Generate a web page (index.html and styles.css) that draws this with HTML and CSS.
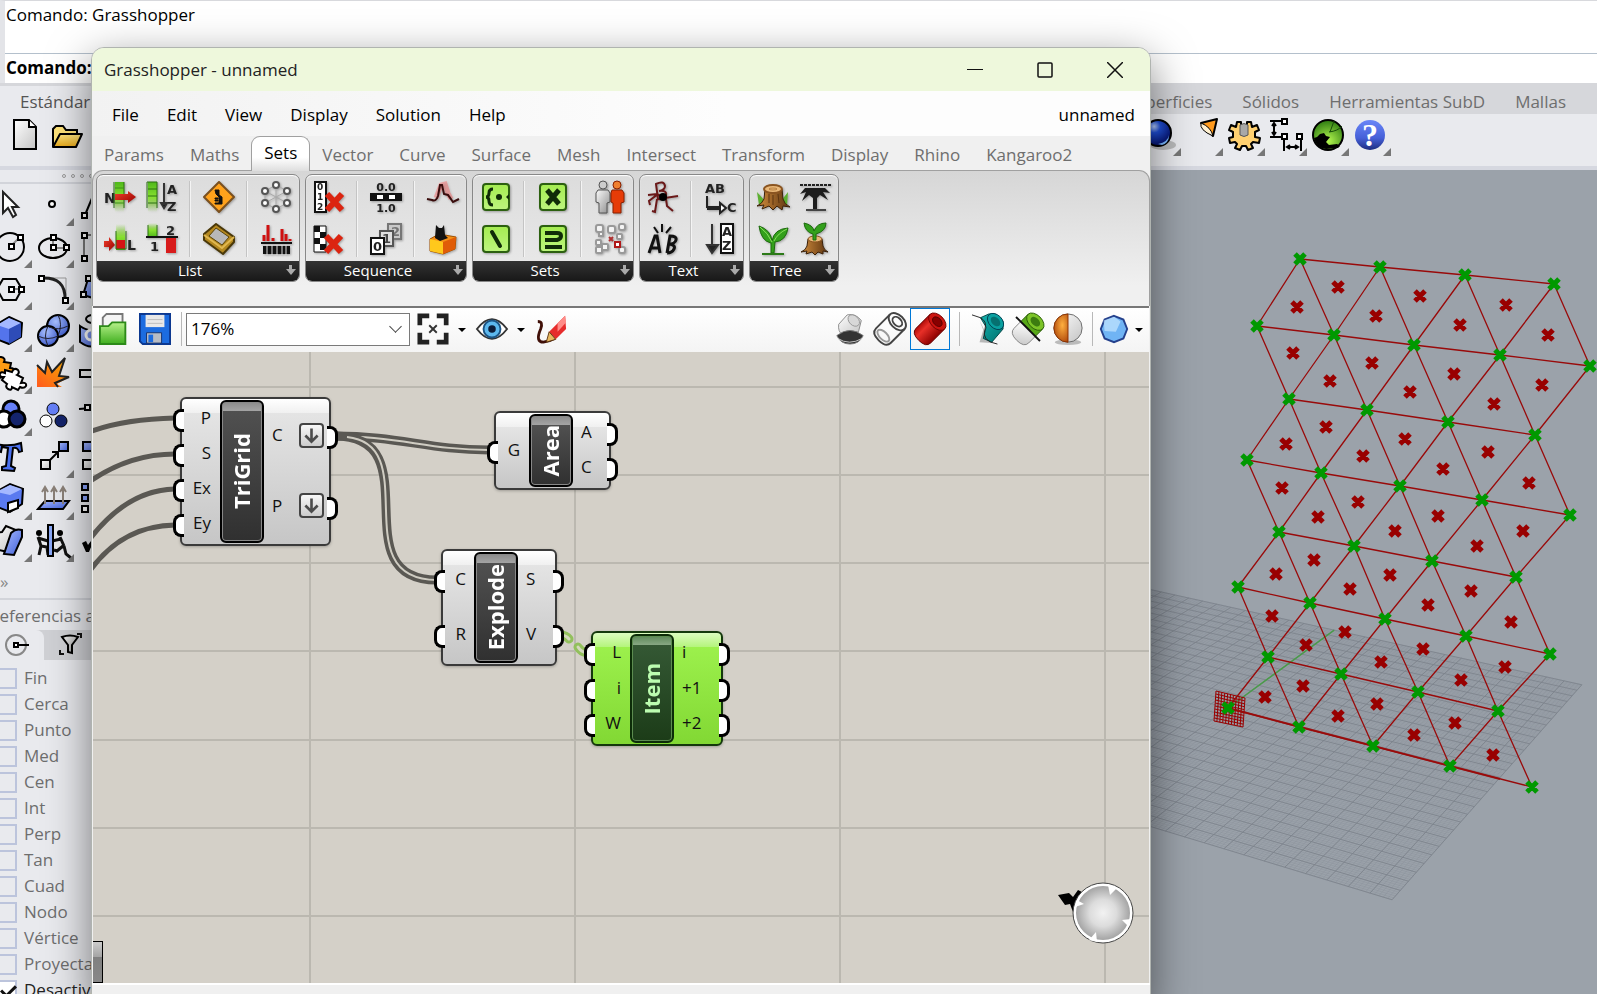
FILE: index.html
```html
<!DOCTYPE html>
<html lang="es">
<head>
    <meta charset="UTF-8">
    <meta name="viewport" content="width=device-width, initial-scale=1.0">
    <title>Grasshopper - unnamed</title>
    <link rel="stylesheet" href="styles.css">
</head>
<body>

    <!-- Shared gradients for the icons -->
    <svg class="defs" width="0" height="0" aria-hidden="true">
        <defs>
            <linearGradient id="g-blue" x1="0" y1="0" x2="1" y2="1"><stop offset="0" stop-color="#a9bcff"/><stop offset="1" stop-color="#3f5fd8"/></linearGradient>
            <linearGradient id="g-page" x1="0" y1="0" x2="1" y2="1"><stop offset="0" stop-color="#fff"/><stop offset="1" stop-color="#c4c4c4"/></linearGradient>
            <linearGradient id="g-gold" x1="0" y1="0" x2="0" y2="1"><stop offset="0" stop-color="#ffe680"/><stop offset="1" stop-color="#e8a818"/></linearGradient>
            <linearGradient id="g-fire" x1="1" y1="0" x2="0" y2="1"><stop offset="0" stop-color="#ffb400"/><stop offset="1" stop-color="#ff5a1e"/></linearGradient>
            <linearGradient id="g-bar" x1="0" y1="0" x2="0" y2="1"><stop offset="0" stop-color="#4fb81a"/><stop offset=".5" stop-color="#86e02e"/><stop offset="1" stop-color="#86e02e" stop-opacity="0"/></linearGradient>
            <linearGradient id="g-barup" x1="0" y1="1" x2="0" y2="0"><stop offset="0" stop-color="#4fb81a"/><stop offset=".5" stop-color="#86e02e"/><stop offset="1" stop-color="#86e02e" stop-opacity="0"/></linearGradient>
            <linearGradient id="g-red" x1="0" y1="0" x2="1" y2="1"><stop offset="0" stop-color="#f2402c"/><stop offset="1" stop-color="#980000"/></linearGradient>
            <linearGradient id="g-redtube" x1="0" y1="0" x2="1" y2="0"><stop offset="0" stop-color="#b00c08"/><stop offset=".3" stop-color="#e83028"/><stop offset="1" stop-color="#8c0000"/></linearGradient>
            <linearGradient id="g-grey" x1="0" y1="0" x2="1" y2="1"><stop offset="0" stop-color="#fafafa"/><stop offset="1" stop-color="#8c8c8c"/></linearGradient>
            <linearGradient id="g-lime" x1="0" y1="0" x2="0" y2="1"><stop offset="0" stop-color="#a4ec50"/><stop offset="1" stop-color="#bdf57e"/></linearGradient>
            <linearGradient id="g-help" x1="0" y1="0" x2="0" y2="1"><stop offset="0" stop-color="#6a86f8"/><stop offset=".6" stop-color="#4660d8"/><stop offset="1" stop-color="#1c2c80"/></linearGradient>
            <radialGradient id="g-ball" cx=".35" cy=".25" r=".8"><stop offset="0" stop-color="#b8d0ff"/><stop offset=".3" stop-color="#2050d8"/><stop offset="1" stop-color="#00085c"/></radialGradient>
            <radialGradient id="g-sphere" cx=".4" cy=".3" r=".8"><stop offset="0" stop-color="#a8c0ff"/><stop offset="1" stop-color="#3452c8"/></radialGradient>
            <radialGradient id="g-green" cx=".5" cy=".7" r=".7"><stop offset="0" stop-color="#b4f850"/><stop offset="1" stop-color="#2c7a10"/></radialGradient>
            <radialGradient id="g-orange" cx=".6" cy=".4" r=".8"><stop offset="0" stop-color="#ffb040"/><stop offset="1" stop-color="#a03400"/></radialGradient>
            <radialGradient id="g-compass"><stop offset="0" stop-color="#f2f2f2"/><stop offset=".5" stop-color="#dcdcdc"/><stop offset="1" stop-color="#a4a4a4"/></radialGradient>
            <linearGradient id="g-open" x1="0" y1="0" x2="0" y2="1"><stop offset="0" stop-color="#b6f08a"/><stop offset="1" stop-color="#3fae1e"/></linearGradient>
            <linearGradient id="g-teal" x1="0" y1="0" x2="1" y2="1"><stop offset="0" stop-color="#14b4b0"/><stop offset="1" stop-color="#00706e"/></linearGradient>
            <linearGradient id="g-wood" x1="0" y1="0" x2="1" y2="0"><stop offset="0" stop-color="#d28c3c"/><stop offset="1" stop-color="#5c3410"/></linearGradient>
        </defs>
    </svg>

    <div class="rhino">
        <section class="command">
            <p class="command-history">Comando: Grasshopper</p>
            <label class="command-line">Comando:<input type="text" aria-label="Comando"></label>
        </section>

        <nav class="rhino-tabs">
            <a class="rhino-tab rhino-tab-active" href="#">Estándar</a>
            <a class="rhino-tab rhino-tab-first" href="#">Superficies</a>
            <a class="rhino-tab" href="#">Sólidos</a>
            <a class="rhino-tab" href="#">Herramientas SubD</a>
            <a class="rhino-tab" href="#">Mallas</a>
        </nav>

        <div class="rhino-toolbar">
            <button class="tool tool-plain" aria-label="Nuevo"><svg viewBox="0 0 32 32"><path d="M5 1h15l7 7v22H5z" fill="url(#g-page)" stroke="#000" stroke-width="2"/><path d="M20 1v7h7" fill="#fff" stroke="#000" stroke-width="2"/></svg></button>
            <button class="tool tool-plain" aria-label="Abrir"><svg viewBox="0 0 32 32"><path d="M2 28V10l3-3h7l3 4h11v5" fill="#ffe47a" stroke="#000" stroke-width="2"/><path d="M2 28l7-13h22l-6 13z" fill="url(#g-gold)" stroke="#000" stroke-width="2" stroke-linejoin="round"/></svg></button>
            <button class="tool tool-first" aria-label="Render"><svg viewBox="0 0 32 32"><ellipse cx="19" cy="26" rx="13" ry="5" fill="#999" opacity=".6"/><circle cx="14" cy="14" r="13" fill="url(#g-ball)" stroke="#000" stroke-width="2"/><path d="M14 25q10-2 11-9 0 8-7 10z" fill="#7ab8ff"/></svg></button>
            <button class="tool" aria-label="Foco"><svg viewBox="0 0 32 32"><path d="M15 4L31 0l-4 17z" fill="#ff9a1e" stroke="#000" stroke-width="2" stroke-linejoin="round"/><path d="M15 4q-2 7 12 13-2-9-12-13z" fill="#fff0d0" stroke="#000" stroke-width="1"/></svg></button>
            <button class="tool" aria-label="Opciones"><svg viewBox="0 0 32 32"><path d="M9 3h4v4h6V3h4l1 5 5-2 2 5-4 2v5l5 1-1 5-6-1-2 2 2 4-5 2-2-4h-4l-2 4-5-2 2-4-2-2-5 1-1-5 4-1v-5l-4-2 2-5 5 2z" fill="#ffd070" stroke="#000" stroke-width="2" stroke-linejoin="round"/><path d="M12 6q4-3 8 0v10q-4 3-8 0z" fill="#a8a8a8" stroke="#555"/></svg></button>
            <button class="tool" aria-label="Acotar"><svg viewBox="0 0 32 32"><path d="M0 2h12M0 18h12M14 20v12M31 20v12M4 5v10M2 7l2-3 2 3M2 13l2 3 2-3M18 28h9M20 26l-3 2 3 2M25 26l3 2-3 2" fill="none" stroke="#000" stroke-width="2"/><path d="M12 0h5v5h-5zM12 15h5v5h-5zM27 15h5v5h-5z" fill="#fff" stroke="#000" stroke-width="2"/></svg></button>
            <button class="tool" aria-label="Grasshopper"><svg viewBox="0 0 32 32"><circle cx="16" cy="16" r="15" fill="url(#g-green)" stroke="#000" stroke-width="2"/><path d="M2 19q4-1 6-4l4-1 2 3 4 1-4 5 3 3 8-1 3 2-2 2-12 1q-10-1-12-11z" fill="#000"/><path d="M17 13q9-1 13-6M18 13L22 2" stroke="#164c08" fill="none"/></svg></button>
            <button class="tool" aria-label="Ayuda"><svg viewBox="0 0 32 32"><circle cx="16" cy="16" r="15" fill="url(#g-help)"/><text x="16" y="27" class="help-mark">?</text></svg></button>
        </div>

        <div class="rhino-main">
            <aside class="sidebar">
                <div class="grip"><i></i><i></i><i></i><i></i></div>
                <div class="tools">
                    <button class="tool tool-plain" aria-label="Seleccionar"><svg viewBox="0 0 32 32"><path d="M8 3v21l5-5 5 9 3-2-4-8h6z" fill="#fff" stroke="#222" stroke-width="2"/></svg></button>
                    <button class="tool" aria-label="Punto"><svg viewBox="0 0 32 32"><circle cx="15" cy="15" r="3" fill="#fff" stroke="#000" stroke-width="2"/></svg></button>
                    <button class="tool" aria-label="Polilínea"><svg viewBox="0 0 32 32"><path d="M6 26L16 2" stroke="#000" stroke-width="2"/><path d="M3 24h5v5H3z" fill="#fff" stroke="#000" stroke-width="2"/></svg></button>

                    <button class="tool" aria-label="Círculo"><svg viewBox="0 0 32 32"><circle cx="15" cy="16" r="14" fill="none" stroke="#000" stroke-width="2"/><path d="M16 15l9-9" stroke="#888" stroke-width="2"/><path d="M14 13h5v5h-5zM23 4h5v5h-5z" fill="#fff" stroke="#000" stroke-width="2"/></svg></button>
                    <button class="tool" aria-label="Elipse"><svg viewBox="0 0 32 32"><ellipse cx="16" cy="17" rx="14" ry="10" fill="none" stroke="#000" stroke-width="2"/><path d="M16 7v10h14" stroke="#888" stroke-width="2" fill="none"/><path d="M14 4h5v5h-5zM14 14h5v5h-5zM27 14h5v5h-5z" fill="#fff" stroke="#000" stroke-width="2"/></svg></button>
                    <button class="tool" aria-label="Rectángulo"><svg viewBox="0 0 32 32"><path d="M5 4h20M5 4v24" stroke="#777" stroke-width="2"/><path d="M3 2h5v5H3zM3 25h5v5H3z" fill="#fff" stroke="#000" stroke-width="2"/></svg></button>

                    <button class="tool" aria-label="Polígono"><svg viewBox="0 0 32 32"><path d="M2 16L8 6h13l6 10-6 11H8z" fill="none" stroke="#000" stroke-width="2"/><path d="M17 16h9" stroke="#888" stroke-width="2"/><path d="M14 14h5v5h-5zM24 14h5v5h-5z" fill="#fff" stroke="#000" stroke-width="2"/></svg></button>
                    <button class="tool" aria-label="Empalme"><svg viewBox="0 0 32 32"><path d="M6 5h23v22" fill="none" stroke="#999"/><path d="M5 5q24-1 23 22" fill="none" stroke="#222" stroke-width="3"/><path d="M2 3h5v5H2zM26 25h5v5h-5z" fill="#fff" stroke="#000" stroke-width="2"/></svg></button>
                    <button class="tool" aria-label="Superficie"><svg viewBox="0 0 32 32"><path d="M9 6L4 22l20 6V8z" fill="url(#g-blue)" stroke="#000" stroke-width="2"/><path d="M7 3h5v5H7zM2 19h5v5H2z" fill="#fff" stroke="#000" stroke-width="2"/></svg></button>

                    <button class="tool" aria-label="Caja"><svg viewBox="0 0 32 32"><path d="M1 10L14 2l13 6-1 14-12 7L1 24z" fill="#5474ec" stroke="#000" stroke-width="2" stroke-linejoin="round"/><path d="M2 10l12-7 12 5-12 6z" fill="#a4b8ff"/><path d="M14 14l12-6v14l-12 7z" fill="#2e4cb8"/></svg></button>
                    <button class="tool" aria-label="Booleana"><svg viewBox="0 0 32 32"><circle cx="21" cy="11" r="11" fill="url(#g-sphere)" stroke="#000" stroke-width="2"/><circle cx="11" cy="21" r="10" fill="url(#g-sphere)" stroke="#000" stroke-width="2"/><path d="M1 21q10 5 20 0M11 11q-5 10 0 20M12 12q9 4 19-1M21 0q5 9 0 21" fill="none" stroke="#223" stroke-width="1"/></svg></button>
                    <button class="tool" aria-label="Proyectar"><svg viewBox="0 0 32 32"><path d="M1 11q13 9 20-1v17q-8 9-20 0z" fill="url(#g-blue)" stroke="#000" stroke-width="2"/><circle cx="12" cy="20" r="5" fill="none" stroke="#fff" stroke-width="3"/><ellipse cx="14" cy="4" rx="7" ry="4" fill="none" stroke="#000" stroke-width="2"/></svg></button>

                    <button class="tool" aria-label="Unir"><svg viewBox="0 0 32 32"><path d="M-4 4l6 1q-1-5 4-5 5 1 3 5l7 1-1 5q5 0 5 4-1 4-6 2l-3 5-6-2q-1 5-5 3-4-1-2-5l-5-1z" fill="#ff9c14" stroke="#000" stroke-width="2"/><path d="M10 13l7 2q2-5 6-2 2 3-1 5l6 3-2 5q6-1 5 3-2 3-6 1l-2 3-6-3q0 4-4 2-3-2-1-5l-5-4 2-3q-5 0-4-3 1-3 5-1z" fill="#fff" stroke="#000" stroke-width="2"/></svg></button>
                    <button class="tool tool-plain" aria-label="Descomponer"><svg viewBox="0 0 32 32"><path d="M0 30V8l8 8 2-11 5 10L28 1l-6 18 10 1-12 7 5 3z" fill="url(#g-fire)"/><path d="M0 8l8 8 2-11 5 10L28 1l-6 18 10 1-14 6 3 4" fill="none" stroke="#222" stroke-width="2"/></svg></button>
                    <button class="tool tool-plain" aria-label="Recortar"><svg viewBox="0 0 32 32"><path d="M1 13h26v7H1z" fill="#eee" stroke="#000" stroke-width="2"/></svg></button>

                    <button class="tool" aria-label="Agrupar"><svg viewBox="0 0 32 32"><g stroke="#000" stroke-width="3"><circle cx="16" cy="10" r="8" fill="#6680f8"/><circle cx="9" cy="20" r="8" fill="#fff"/><circle cx="22" cy="20" r="8" fill="#14246c"/></g></svg></button>
                    <button class="tool tool-plain" aria-label="Desagrupar"><svg viewBox="0 0 32 32"><g stroke="#000" stroke-width="1"><circle cx="16" cy="10" r="6" fill="#6680f8"/><circle cx="9" cy="22" r="6" fill="#fff"/><circle cx="24" cy="22" r="6" fill="#14246c"/></g></svg></button>
                    <button class="tool tool-plain" aria-label="Editar puntos"><svg viewBox="0 0 32 32"><path d="M0 10l24-2" stroke="#000" stroke-width="2"/><path d="M6 6h5v5H6z" fill="#fff" stroke="#000" stroke-width="2"/></svg></button>

                    <button class="tool tool-plain" aria-label="Texto"><svg viewBox="0 0 32 32"><path d="M1 3q14 3 25-1l1 8-3 1q-1-5-6-4l-2 18 4 2-1 3-12-1v-3l4-1 2-18-6-1-1 5-4-1z" fill="#4a70f0" stroke="#000" stroke-width="2"/></svg></button>
                    <button class="tool" aria-label="Mover"><svg viewBox="0 0 32 32"><path d="M13 19l8-8M15 11h6v6" stroke="#000" stroke-width="2" fill="none"/><path d="M22 1h9v9h-9z" fill="url(#g-blue)" stroke="#000" stroke-width="2"/><path d="M4 19h9v9H4z" fill="url(#g-page)" stroke="#000" stroke-width="2"/></svg></button>
                    <button class="tool" aria-label="Copiar"><svg viewBox="0 0 32 32"><path d="M4 1h9v9H4zM17 1h9v9h-9z" fill="url(#g-blue)" stroke="#000" stroke-width="2"/><path d="M4 19h9v9H4z" fill="url(#g-page)" stroke="#000" stroke-width="2"/></svg></button>

                    <button class="tool" aria-label="Sólidos"><svg viewBox="0 0 32 32"><path d="M1 9l14-8 13 5-1 15-12 8L0 23z" fill="#5a7af0" stroke="#000" stroke-width="2"/><path d="M1 9l14-7 12 4-12 6z" fill="#a4b8ff"/><path d="M13 20l10-3v8l-10 4z" fill="#fff" stroke="#000" stroke-width="2"/></svg></button>
                    <button class="tool" aria-label="Extruir"><svg viewBox="0 0 32 32"><path d="M1 26l7-8h24l-6 8z" fill="url(#g-blue)" stroke="#000" stroke-width="2"/><path d="M8 21V5M17 21V5M26 21V5M5 9l3-5 3 5M14 9l3-5 3 5M23 9l3-5 3 5" stroke="#8a8078" stroke-width="2" fill="none"/></svg></button>
                    <button class="tool" aria-label="Matriz"><svg viewBox="0 0 32 32"><path d="M3 1h6v6H3zM13 1h6v6h-6zM3 12h6v6H3zM13 12h6v6h-6z" fill="#8aa4ff" stroke="#000" stroke-width="2"/><path d="M3 23h6v6H3zM13 23h6v6h-6z" fill="#fff" stroke="#000" stroke-width="2"/></svg></button>

                    <button class="tool" aria-label="Mallas"><svg viewBox="0 0 32 32"><path d="M-2 8l9-1 4-6 10 4-8 22-13-3z" fill="url(#g-page)" stroke="#000" stroke-width="2"/><path d="M16 8q5-5 11-3v7l-8 18-10-1z" fill="url(#g-blue)" stroke="#000" stroke-width="2"/></svg></button>
                    <button class="tool" aria-label="Orientar"><svg viewBox="0 0 32 32"><circle cx="2" cy="8" r="3"/><circle cx="23" cy="8" r="3"/><path d="M1 12l3 9M1 13l10 3M4 21l-2 9M4 21l6 1 1 8M23 12l4 9M24 14l-9 2M26 21l-6 5-3-1M27 21l2 8 5 4" stroke="#111" stroke-width="3" fill="none"/><path d="M11 0h5v31h-5z" fill="#8aa8f8" stroke="#000" stroke-width="2"/></svg></button>
                    <button class="tool tool-plain" aria-label="Verificar"><svg viewBox="0 0 32 32"><path d="M3 18l4-2 2 4q5-8 13-11-9 9-12 18H7z" fill="#000"/></svg></button>
                </div>
                <p class="more">»</p>
                <h2 class="osnap-title">Referencias a objetos</h2>
                <div class="osnap-tabs">
                    <button class="osnap-tab osnap-tab-active" aria-label="Referencias"><svg viewBox="0 0 32 24"><circle cx="12" cy="12" r="10" fill="none" stroke="#888" stroke-width="2"/><path d="M13 12h12" stroke="#000" stroke-width="2"/><path d="M10 10h4v4h-4z" fill="#fff" stroke="#000" stroke-width="2"/></svg></button>
                    <button class="osnap-tab" aria-label="Filtro"><svg viewBox="0 0 32 24"><path d="M7 4q8-3 16 0l-6 8v8l-4-1v-7z" fill="url(#g-grey)" stroke="#000" stroke-width="2"/><path d="M22 1h4v4M5 17v4h4" fill="none" stroke="#111" stroke-width="2"/></svg></button>
                </div>
                <div class="osnaps">
                    <label><input type="checkbox">Fin</label>
                    <label><input type="checkbox">Cerca</label>
                    <label><input type="checkbox">Punto</label>
                    <label><input type="checkbox">Med</label>
                    <label><input type="checkbox">Cen</label>
                    <label><input type="checkbox">Int</label>
                    <label><input type="checkbox">Perp</label>
                    <label><input type="checkbox">Tan</label>
                    <label><input type="checkbox">Cuad</label>
                    <label><input type="checkbox">Nodo</label>
                    <label><input type="checkbox">Vértice</label>
                    <label><input type="checkbox">Proyectar</label>
                    <label class="osnap-on"><input type="checkbox" checked>Desactivar</label>
                </div>
            </aside>
            <main class="viewport">
                <svg id="scene" width="1437" height="824"></svg>
            </main>
        </div>
    </div>

    <!-- Grasshopper window -->
    <div class="window">
        <header class="titlebar">
            <h1>Grasshopper - unnamed</h1>
            <button class="caption-button" aria-label="Minimizar"><svg viewBox="0 0 16 16"><path d="M0 7.5h16" stroke="#111"/></svg></button>
            <button class="caption-button" aria-label="Maximizar"><svg viewBox="0 0 16 16"><rect x="1" y="1" width="14" height="14" rx="1" fill="none" stroke="#111" stroke-width="1.5"/></svg></button>
            <button class="caption-button" aria-label="Cerrar"><svg viewBox="0 0 16 16"><path d="M0 0l16 16M16 0L0 16" stroke="#111" stroke-width="1.5"/></svg></button>
        </header>

        <nav class="menu">
            <button>File</button>
            <button>Edit</button>
            <button>View</button>
            <button>Display</button>
            <button>Solution</button>
            <button>Help</button>
            <span class="menu-doc">unnamed</span>
        </nav>

        <nav class="tabs">
            <a href="#">Params</a>
            <a href="#">Maths</a>
            <a class="tab-active" href="#">Sets</a>
            <a href="#">Vector</a>
            <a href="#">Curve</a>
            <a href="#">Surface</a>
            <a href="#">Mesh</a>
            <a href="#">Intersect</a>
            <a href="#">Transform</a>
            <a href="#">Display</a>
            <a href="#">Rhino</a>
            <a href="#">Kangaroo2</a>
        </nav>

        <div class="ribbon">
            <section class="group">
                <div class="cells">
                    <div class="col">
                        <button aria-label="List Item"><svg viewBox="0 0 32 32"><text x="0" y="22" class="ink ink-lg">N</text><path d="M11 1h9v30h-9z" fill="url(#g-bar)"/><path d="M10 1v26M20 1v26" stroke="#2a7010"/><path d="M11 7h9M11 22h9" stroke="#3a9018"/><path d="M11 13h13v-3l8 6-8 6v-3H11z" fill="url(#g-red)"/></svg></button>
                        <button aria-label="List Length"><svg viewBox="0 0 32 32"><path d="M12 1h9v26h-9z" fill="url(#g-barup)"/><path d="M12 17h9v9h-9z" fill="#d41414"/><path d="M12 8v18h10V8" fill="none" stroke="#2a7010"/><path d="M0 18h5v-4l6 8-6 6v-4H0z" fill="url(#g-red)"/><text x="23" y="27" class="ink ink-lg">L</text></svg></button>
                    </div>
                    <div class="col">
                        <button aria-label="Sort List"><svg viewBox="0 0 32 32"><path d="M2 1h9v30H2z" fill="url(#g-bar)"/><path d="M1 27V1h10v26M2 8h9M2 15h9M2 22h9" fill="none" stroke="#2a7010"/><path d="M18 2v22M15 22l3 5 3-5z" stroke="#333" stroke-width="2"/><text x="21" y="13" class="ink">A</text><text x="21" y="30" class="ink">Z</text></svg></button>
                        <button aria-label="Partition List"><svg viewBox="0 0 32 32"><path d="M2 0h9v14H2z" fill="url(#g-barup)"/><path d="M2 2v12M11 2v12" stroke="#2a7010"/><path d="M20 15h10v15H20z" fill="#d81c1c"/><path d="M0 14h32" stroke="#111" stroke-width="2"/><text x="4" y="28" class="ink">1</text><text x="20" y="12" class="ink">2</text></svg></button>
                    </div>
                    <i class="sep"></i>
                    <div class="col">
                        <button aria-label="Dispatch"><svg viewBox="0 0 32 32"><path d="M16 1l15 15-15 15L1 16z" fill="#ffa21c" stroke="#7a5020" stroke-width="2" stroke-linejoin="round"/><path d="M12 9l1 4 3 3v6h-4v1h7v-7l-3-2V9zM12 17h3v1h-3zM12 19h3v1h-3z" fill="#111" stroke="#111"/></svg></button>
                        <button aria-label="Sift"><svg viewBox="0 0 32 32"><path d="M13 1L31 14v5L20 31 1 17v-6z" fill="#b48820" stroke="#4a3808" stroke-width="2" stroke-linejoin="round"/><path d="M13 5l13 9-7 8L6 13z" fill="#b8b8b8" stroke="#5a4408"/><path d="M1 12l18 13 12-11" fill="none" stroke="#e0b850" stroke-width="2"/></svg></button>
                    </div>
                    <i class="sep"></i>
                    <div class="col">
                        <button aria-label="Cross Reference"><svg viewBox="0 0 32 32"><path d="M16 4L5 10v12l11 6 11-6V10zM5 10l22 12M27 10L5 22M16 4v24" fill="none" stroke="#aaa"/><g fill="#fff" stroke="#555" stroke-width="2"><circle cx="16" cy="4" r="3"/><circle cx="5" cy="10" r="3"/><circle cx="27" cy="10" r="3"/><circle cx="5" cy="22" r="3"/><circle cx="27" cy="22" r="3"/><circle cx="16" cy="28" r="3"/></g></svg></button>
                        <button aria-label="Weave"><svg viewBox="0 0 32 32"><path d="M4 18v-6M8 18V2M13 18v-3M22 18V6M26 18v-7M30 18v-2" stroke="#d01010" stroke-width="3"/><path d="M1 20h31" stroke="#111" stroke-width="2"/><path d="M3 23h27v8H3z" fill="#111"/><path d="M7 22v10M12 22v10M17 22v10M22 22v10M26 22v10" stroke="#ddd"/></svg></button>
                    </div>
                </div>
                <h3>List</h3>
            </section>

            <section class="group">
                <div class="cells">
                    <div class="col">
                        <button aria-label="Cull Index"><svg viewBox="0 0 32 32"><path d="M2 1h11v30H2z" fill="#fff" stroke="#111" stroke-width="2"/><text x="4" y="9" class="ink ink-sm">0</text><text x="4" y="19" class="ink ink-sm">1</text><text x="4" y="29" class="ink ink-sm">2</text><path d="M14 13l15 16M29 13L14 29" stroke="#dc2410" stroke-width="6"/></svg></button>
                        <button aria-label="Cull Pattern"><svg viewBox="0 0 32 32"><path d="M1 3h12v26H1z" fill="#fff" stroke="#111"/><path d="M1 3h6v6H1zM7 9h6v6H7zM1 15h6v6H1zM7 21h6v6H7z" fill="#111"/><path d="M13 13l15 16M28 13L13 29" stroke="#dc2410" stroke-width="6"/></svg></button>
                    </div>
                    <i class="sep"></i>
                    <div class="col">
                        <button aria-label="Range"><svg viewBox="0 0 32 32"><text x="16" y="10" class="ink ink-mid">0.0</text><path d="M1 13h30v6H1z" fill="#fff" stroke="#111" stroke-width="2"/><path d="M1 13h6v6H1zM13 13h6v6h-6zM25 13h6v6h-6z" fill="#111"/><text x="16" y="31" class="ink ink-mid">1.0</text></svg></button>
                        <button aria-label="Series"><svg viewBox="0 0 32 32"><path d="M18 1h13v15H18z" fill="#c8c8c8" stroke="#777" stroke-width="2"/><text x="21" y="13" class="ink" opacity=".5">2</text><path d="M10 8h13v15H10z" fill="#e0e0e0" stroke="#555" stroke-width="2"/><text x="12" y="20" class="ink" opacity=".8">1</text><path d="M1 15h13v16H1z" fill="#fff" stroke="#111" stroke-width="2"/><text x="3" y="28" class="ink">0</text></svg></button>
                    </div>
                    <i class="sep"></i>
                    <div class="col">
                        <button aria-label="Jitter"><svg viewBox="0 0 32 32"><path d="M9 17l5-13 4-1 3 9 3 6" fill="none" stroke="#f55" stroke-width="5" opacity=".4"/><path d="M0 18l5 1q4 2 6-4l2-11h2l2 9 4 1 5 7 6-3" fill="none" stroke="#3a0c0c" stroke-width="2"/></svg></button>
                        <button aria-label="Random"><svg viewBox="0 0 32 32"><path d="M3 16l9-5 17 3-1 12-12 5-13-3z" fill="#f49018" stroke="#a05000"/><path d="M3 16l13 3v12L3 28z" fill="#ffc81c"/><path d="M16 19l13-5-1 12-12 5z" fill="#e05c08"/><path d="M8 15l1-13 3 3h3l2-3 1 10 3 3-8 3z" fill="#111"/></svg></button>
                    </div>
                </div>
                <h3>Sequence</h3>
            </section>

            <section class="group">
                <div class="cells">
                    <div class="col">
                        <button aria-label="Create Set"><svg viewBox="0 0 32 32"><rect x="3" y="3" width="26" height="26" rx="3" fill="url(#g-lime)" stroke="#2c6010" stroke-width="2"/><path d="M13 8q-4 0-4 4t-3 4q3 0 3 4t4 4" fill="none" stroke="#102c08" stroke-width="3"/><circle cx="19" cy="16" r="3" fill="#102c08"/><path d="M29 13l-3 3 3 3z" fill="#102c08"/></svg></button>
                        <button aria-label="Set Difference"><svg viewBox="0 0 32 32"><rect x="3" y="3" width="26" height="26" rx="3" fill="url(#g-lime)" stroke="#2c6010" stroke-width="2"/><path d="M12 9l8 14" stroke="#102c08" stroke-width="4" stroke-linecap="round"/></svg></button>
                    </div>
                    <i class="sep"></i>
                    <div class="col">
                        <button aria-label="Set Intersection"><svg viewBox="0 0 32 32"><rect x="3" y="3" width="26" height="26" rx="3" fill="url(#g-lime)" stroke="#2c6010" stroke-width="2"/><path d="M10 9l12 14M22 9L10 23" stroke="#102c08" stroke-width="5"/></svg></button>
                        <button aria-label="Set Union"><svg viewBox="0 0 32 32"><rect x="3" y="3" width="26" height="26" rx="3" fill="url(#g-lime)" stroke="#2c6010" stroke-width="2"/><path d="M8 10h12q4 0 4 3t-4 4H8M8 24h17" fill="none" stroke="#102c08" stroke-width="4"/></svg></button>
                    </div>
                    <i class="sep"></i>
                    <div class="col">
                        <button aria-label="Member Index"><svg viewBox="0 0 32 32"><circle cx="9" cy="4" r="4" fill="#ccc" stroke="#555"/><path d="M4 9h10l2 3v9l-3 1v10H5V22l-3-1v-9z" fill="url(#g-grey)" stroke="#555"/><circle cx="23" cy="4" r="4" fill="#f08030" stroke="#8a2000"/><path d="M18 9h10l2 3v9l-3 1v10h-8V22l-2-1v-9z" fill="#e63c08" stroke="#8a2000"/></svg></button>
                        <button aria-label="Find similar"><svg viewBox="0 0 32 32"><g fill="#f4f4f4" stroke="#999" stroke-width="2"><rect x="2" y="2" width="7" height="7" rx="2"/><rect x="14" y="3" width="7" height="7" rx="2"/><rect x="25" y="1" width="6" height="6" rx="2"/><rect x="5" y="9" width="4" height="4"/><rect x="23" y="11" width="5" height="5" rx="1"/><rect x="2" y="17" width="5" height="5" rx="1"/><rect x="2" y="24" width="6" height="6" rx="1"/><rect x="8" y="21" width="6" height="6" rx="1"/><rect x="25" y="24" width="6" height="6" rx="2"/></g><path d="M15 14l4 4M19 14l-4 4" stroke="#b03030" stroke-width="2"/><rect x="21" y="19" width="5" height="5" fill="#fff" stroke="#b01818" stroke-width="2"/></svg></button>
                    </div>
                </div>
                <h3>Sets</h3>
            </section>

            <section class="group">
                <div class="cells">
                    <div class="col">
                        <button aria-label="Characters"><svg viewBox="0 0 32 32"><path d="M9 3q8-4 9 2 0 4-6 5 8-1 7 4t-8 4zM1 14l9-1 8 4 13-2M3 24l-1-4 9-7M10 18l-2 13-3-1M19 18l1 7 6 5" fill="none" stroke="#6a1818" stroke-width="2"/><circle cx="16" cy="16" r="4"/></svg></button>
                        <button aria-label="Concatenate"><svg viewBox="0 0 32 32"><path d="M7 4l4 6M15 1v8M24 4l-5 6" stroke="#111" stroke-width="2"/><path d="M2 30l6-17h2l3 17M4 25h8" fill="none" stroke="#111" stroke-width="3"/><path d="M20 30l3-17q7 0 6 4t-7 4q7 1 5 5t-7 4" fill="none" stroke="#111" stroke-width="3"/></svg></button>
                    </div>
                    <i class="sep"></i>
                    <div class="col">
                        <button aria-label="Text Join"><svg viewBox="0 0 32 32"><text x="1" y="12" class="ink">AB</text><path d="M3 15v11h13v-4l6 5-6 5v-4H3" fill="#fff" stroke="#222" stroke-width="2"/><text x="23" y="31" class="ink">C</text></svg></button>
                        <button aria-label="Sort Text"><svg viewBox="0 0 32 32"><path d="M8 1v22M3 22l5 8 6-8z" stroke="#333" stroke-width="2" fill="#222"/><path d="M17 1h12v29H17z" fill="#fff" stroke="#111" stroke-width="2"/><text x="18" y="13" class="ink">A</text><text x="18" y="27" class="ink">Z</text></svg></button>
                    </div>
                </div>
                <h3>Text</h3>
            </section>

            <section class="group">
                <div class="cells">
                    <div class="col">
                        <button aria-label="Clean Tree"><svg viewBox="0 0 32 32"><path d="M2 24L0 11l8 9M30 24l1-13-7 9" fill="#5cb030"/><path d="M8 8l-1 10q-2 5-7 7l7-1-2 4 7-3 4 4 4-4 5 4 1-4 7 1q-6-3-7-8l-1-10z" fill="url(#g-wood)" stroke="#3a2008"/><path d="M12 13v9M16 14v10M21 13l1 9" stroke="#5c3410"/><ellipse cx="16" cy="8" rx="9" ry="4" fill="#eab878" stroke="#8a5420" stroke-width="2"/><ellipse cx="16" cy="8" rx="4" ry="1" fill="none" stroke="#b88040"/></svg></button>
                        <button aria-label="Graft Tree"><svg viewBox="0 0 32 32"><path d="M14 30V20Q4 18 2 3q12 4 13 15Q17 6 31 5q-2 13-13 14l-1 11z" fill="#34a01c" stroke="#1c6a0c"/><path d="M3 4q8 6 12 15M30 6q-9 4-13 12" fill="none" stroke="#8ae05c"/><path d="M5 31h22" stroke="#2c7a18" stroke-width="2"/></svg></button>
                    </div>
                    <div class="col">
                        <button aria-label="Trim Tree"><svg viewBox="0 0 32 32"><path d="M1 4h31" stroke="#222" stroke-width="2" stroke-dasharray="3 1"/><path d="M6 7h20l5 5-7-1 5 8-8-5-3 3v11h-4V17l-4-3-7 6 4-9-6 2z" fill="#1c1c1c"/><path d="M7 29h20" stroke="#444" stroke-width="2"/></svg></button>
                        <button aria-label="Flatten Tree"><svg viewBox="0 0 32 32"><path d="M9 16l-1 7q-1 4-6 6l6-1-1 3 6-2 3 3 3-3 5 2v-3l5 1q-4-2-5-6l-1-7z" fill="url(#g-wood)" stroke="#3a2008"/><ellipse cx="16" cy="16" rx="7" ry="3" fill="#eab878" stroke="#8a5420"/><path d="M14 17v-6Q6 9 5 0q9 2 10 8 3-8 12-8 0 8-10 11v6z" fill="#34a01c" stroke="#1c6a0c"/></svg></button>
                    </div>
                </div>
                <h3>Tree</h3>
            </section>
        </div>

        <div class="canvas-bar">
            <button class="bar-button" aria-label="Open"><svg viewBox="0 0 34 34"><path d="M4 20V5l4-4h17v16z" fill="#f4f4f4" stroke="#777" stroke-width="2"/><path d="M1 33V14h9l4-4h14v23z" fill="url(#g-open)" stroke="#2c8a18" stroke-width="2"/></svg></button>
            <button class="bar-button" aria-label="Save"><svg viewBox="0 0 34 34"><path d="M1 1h32v32H4l-3-3z" fill="#1c6ce0" stroke="#0c3890" stroke-width="2"/><path d="M7 2h20v13H7z" fill="#e8e8e8"/><path d="M9 7h16M9 11h16" stroke="#bbb"/><path d="M8 21h16v11H8z" fill="#b8bcc4" stroke="#14316c"/><path d="M10 23h5v8h-5z" fill="#1c6ce0"/></svg></button>
            <i class="bar-sep bar-sep-left"></i>
            <span class="zoom-box">
                <select aria-label="Zoom"><option>176%</option></select>
            </span>
            <button class="bar-button" aria-label="Zoom extents"><svg viewBox="0 0 34 34"><path d="M3 13V3h10M21 3h10v10M31 21v10H21M13 31H3V21" fill="none" stroke="#222" stroke-width="5"/><path d="M13 13l8 8M21 13l-8 8" stroke="#333" stroke-width="2"/></svg></button>
            <i class="caret"></i>
            <button class="bar-button" aria-label="Preview"><svg viewBox="0 0 34 34"><path d="M1 17Q17-4 33 17 17 38 1 17z" fill="#fff" stroke="#333" stroke-width="2"/><circle cx="17" cy="17" r="9" fill="#5cb8ee" stroke="#1c5484" stroke-width="2"/><circle cx="17" cy="17" r="4" fill="#0c1c38"/></svg></button>
            <i class="caret"></i>
            <button class="bar-button" aria-label="Sketch"><svg viewBox="0 0 34 34"><path d="M3 9q6 0 3 8-6 14 3 14 7-1 12-4" fill="none" stroke="#401008" stroke-width="3"/><path d="M15 20L32 3l1 14-11 11z" fill="#e62c2c"/><path d="M24 11l8-8 1 7-9 10z" fill="#ff8c88"/><path d="M15 20l7 8-10 3z" fill="#e8b860" stroke="#5c3410"/></svg></button>

            <button class="bar-button bar-right" aria-label="No preview"><svg viewBox="0 0 34 34"><path d="M5 12l9-10q9-2 15 6l-3 12-17 3q-5-3-4-11z" fill="url(#g-page)" stroke="#888"/><ellipse cx="21" cy="8" rx="5" ry="7" transform="rotate(-45 21 8)" fill="#d8d8d8" stroke="#999"/><path d="M3 24q14-11 28 0-4 9-14 9T3 24z" fill="#333" stroke="#777"/><path d="M4 27q12 8 26 0" stroke="#ccc" fill="none"/></svg></button>
            <button class="bar-button" aria-label="Wireframe"><svg viewBox="0 0 34 34"><g fill="none" stroke="#444" stroke-width="2" transform="rotate(45 17 17)"><path d="M6 6v21q0 7 11 7t11-7V6"/><ellipse cx="17" cy="6" rx="11" ry="7"/><ellipse cx="17" cy="6" rx="6" ry="4"/><ellipse cx="17" cy="27" rx="8" ry="4" stroke="#999"/></g></svg></button>
            <button class="bar-button bar-selected" aria-label="Shaded"><svg viewBox="0 0 34 34"><g transform="rotate(45 17 17)"><path d="M6 6v21q0 7 11 7t11-7V6z" fill="url(#g-redtube)" stroke="#600"/><ellipse cx="17" cy="6" rx="11" ry="7" fill="#cc1410" stroke="#700"/><ellipse cx="17" cy="6" rx="6" ry="4" fill="#800" stroke="#500"/></g></svg></button>
            <i class="bar-sep"></i>
            <button class="bar-button" aria-label="Selected preview"><svg viewBox="0 0 34 34"><path d="M8 8l4 10-4 13 12 1z" fill="#777" opacity=".5"/><path d="M9 5l9-4h7l8 8v8L21 31l-9-4 3-12z" fill="url(#g-teal)" stroke="#044"/><ellipse cx="25" cy="9" rx="7" ry="10" transform="rotate(-45 25 9)" fill="#0aa0a0" stroke="#045"/><ellipse cx="25" cy="9" rx="4" ry="6" transform="rotate(-45 25 9)" fill="#067070"/><path d="M0 2l9 3q7 4 5 11-5 14 13 17" fill="none" stroke="#222"/></svg></button>
            <button class="bar-button" aria-label="Clipped preview"><svg viewBox="0 0 34 34"><g transform="rotate(45 17 17)"><path d="M6 17v10q0 7 11 7t11-7V17z" fill="url(#g-page)" stroke="#888"/><path d="M6 6v11h22V6z" fill="#58a818" stroke="#2c6008"/><ellipse cx="17" cy="6" rx="11" ry="7" fill="#7cc428" stroke="#2c6008"/><ellipse cx="17" cy="6" rx="6" ry="4" fill="#3c7c10"/><path d="M-1 17h36" stroke="#111" stroke-width="2"/></g></svg></button>
            <button class="bar-button" aria-label="Mesh quality"><svg viewBox="0 0 34 34"><ellipse cx="17" cy="31" rx="14" ry="3" fill="#bbb"/><circle cx="17" cy="16" r="15" fill="url(#g-page)" stroke="#666"/><path d="M17 1a15 15 0 0 0 0 30z" fill="url(#g-orange)" stroke="#8a3000"/></svg></button>
            <i class="bar-sep bar-sep-right"></i>
            <button class="bar-button" aria-label="Preview mesh"><svg viewBox="0 0 34 34"><path d="M17 3l10 4 4 10-4 10-10 4-10-4-4-10L7 7z" fill="#70b4f4" stroke="#24408c" stroke-width="2"/><path d="M17 4l7 5-5 11-12-1-1-11z" fill="#c4e6ff" opacity=".7"/></svg></button>
            <i class="caret caret-last"></i>
        </div>

        <div class="canvas">
            <svg class="wires" width="100%" height="100%">
                <g transform="translate(-94 -352)">
                    <path class="grid-line" d="M94 387h2000M94 475h2000M94 563h2000M94 651h2000M94 740h2000M94 828h2000M94 916h2000M311 352v900M576 352v900M841 352v900M1106 352v900"/>
                    <path class="wire" d="M90 432Q125 419 176 418M90 482Q130 454 176 454M90 540Q128 490 176 489M90 572Q122 526 176 525"/>
                    <path class="wire-outer" d="M336 436C400 436 430 450 490 450"/>
                    <path class="wire-inner" d="M342 436C402 437 432 450 490 450"/>
                    <path class="wire-outer" d="M336 436C434 436 340 580 438 580"/>
                    <path class="wire-inner" d="M348 437C426 445 344 580 438 580"/>
                    <path class="wire-tree" d="M561 635q6 0 9 4M579 647q3 5 9 6"/>
                    <path class="wire-tree-inner" d="M561 635q6 0 9 4M579 647q3 5 9 6"/>
                    <!-- canvas navigation compass -->
                    <path d="M1059 895l11-2 4 4 5-7 4 2-9 20-3-8-5 1z" fill="#000"/>
                    <circle cx="1104" cy="913" r="30" fill="#fff" stroke="#444"/>
                    <circle cx="1104" cy="913" r="27" fill="url(#g-compass)"/>
                    <path d="M1109 885l9 3-7 7zM1078 900l7 4-9 3zM1132 919l-9 1 7 7zM1097 932l-7 8 8 2z" fill="#fff"/>
                </g>
            </svg>

            <article class="node node-trigrid">
                <ul class="ins"><li>P</li><li>S</li><li>Ex</li><li>Ey</li></ul>
                <h4><span>TriGrid</span></h4>
                <ul class="outs">
                    <li>C<svg class="flatten" viewBox="0 0 24 24"><path d="M12 4v14M5 12l7 7 7-7" fill="none" stroke="#4c4c4c" stroke-width="3"/></svg></li>
                    <li>P<svg class="flatten" viewBox="0 0 24 24"><path d="M12 4v14M5 12l7 7 7-7" fill="none" stroke="#4c4c4c" stroke-width="3"/></svg></li>
                </ul>
            </article>

            <article class="node node-area">
                <ul class="ins"><li>G</li></ul>
                <h4><span>Area</span></h4>
                <ul class="outs"><li>A</li><li>C</li></ul>
            </article>

            <article class="node node-explode">
                <ul class="ins"><li>C</li><li>R</li></ul>
                <h4><span>Explode</span></h4>
                <ul class="outs"><li>S</li><li>V</li></ul>
            </article>

            <article class="node node-item">
                <ul class="ins"><li>L</li><li>i</li><li>W</li></ul>
                <h4><span>Item</span></h4>
                <ul class="outs"><li>i</li><li>+1</li><li>+2</li></ul>
            </article>

            <div class="edge-widget"></div>
        </div>
        <footer class="status"></footer>
    </div>

    <script src="script.js"></script>
</body>
</html>
```

FILE: styles.css
```css
* {
    box-sizing: border-box;
}
body {
    margin: 0;
    height: 100vh;
    overflow: hidden;
    position: relative;
    font-family: "Open Sans", "Noto Sans", sans-serif;
    font-size: 17px;
    line-height: 24px;
    color: #000;
}
h1, h2, h3, h4, p, ul {
    margin: 0;
    padding: 0;
    font-size: 17px;
    font-weight: normal;
}
ul {
    list-style: none;
}
a {
    color: inherit;
    text-decoration: none;
}
button {
    font: inherit;
    color: inherit;
    background: none;
    border: none;
    padding: 0;
}
svg {
    display: block;
}
.defs {
    position: absolute;
}

/* Rhino */
.rhino {
    height: 100%;
    display: flex;
    flex-direction: column;
    background-color: #e9eaee;
}
.command {
    flex: none;
    height: 83px;
    background-color: #fff;
    border-left: 5px solid #e3e4e8;
    border-top: 1px solid #d8d9dd;
}
.command-history {
    height: 53px;
    padding: 2px 1px;
    border-bottom: 1px solid #b4c0cc;
}
.command-line {
    display: flex;
    padding: 2px 1px;
    font-weight: bold;
}
.command-line input {
    flex: 1;
    min-width: 0;
    border: none;
    outline: none;
}
.rhino-tabs {
    flex: none;
    display: flex;
    gap: 30px;
    height: 31px;
    padding-right: 31px;
    line-height: 37px;
    color: #6e6e6e;
    background-color: #d6d7db;
}
.rhino-tab-active {
    width: 130px;
    padding-left: 20px;
    border-top: 3px solid #d6d7db;
    line-height: 31px;
    color: #555;
    background-color: #e9eaee;
}
.rhino-tab-first {
    margin-left: auto;
}
.rhino-toolbar {
    flex: none;
    display: flex;
    height: 56px;
    padding: 0 206px 0 4px;
    border-bottom: 4px solid #d6d8e0;
}
.tool {
    position: relative;
    width: 42px;
    height: 42px;
    padding: 5px;
}
.tool svg {
    width: 32px;
    height: 32px;
    overflow: visible;
}
.tool::after {
    content: "";
    position: absolute;
    right: 0;
    bottom: 0;
    border-left: 8px solid transparent;
    border-bottom: 8px solid #777;
}
.tool-plain::after {
    display: none;
}
.tool-first {
    margin-left: auto;
}
.help-mark {
    font: bold 32px "Liberation Serif", serif;
    fill: #fff;
    text-anchor: middle;
}
.rhino-main {
    flex: 1;
    min-height: 0;
    display: flex;
}
.sidebar {
    flex: none;
    width: 160px;
    overflow: hidden;
}
.grip {
    display: flex;
    gap: 5px;
    height: 14px;
    padding: 4px 0 0 62px;
    border-bottom: 2px solid #d2d4da;
}
.grip i {
    width: 4px;
    height: 4px;
    border: 1px solid #999;
    border-radius: 50%;
}
.tools {
    display: grid;
    grid-template-columns: repeat(3, 42px);
    margin-left: -10px;
}
.more {
    height: 38px;
    padding-top: 8px;
    color: #888;
    border-bottom: 2px solid #d2d4da;
}
.osnap-title {
    height: 30px;
    padding-top: 4px;
    margin-left: -11px;
    white-space: nowrap;
    color: #6e6e6e;
}
.osnap-tabs {
    display: flex;
    height: 30px;
    background-color: #d0d1d5;
}
.osnap-tab {
    width: 54px;
    padding: 3px 11px;
}
.osnap-tab-active {
    width: 44px;
    padding: 3px 4px;
    border-radius: 0 8px 0 0;
    background-color: #e9eaee;
}
.osnap-tab svg {
    width: 32px;
    height: 24px;
}
.osnaps {
    padding-top: 5px;
}
.osnaps label {
    display: flex;
    align-items: center;
    gap: 7px;
    height: 26px;
    margin-left: -4px;
    color: #6e6e6e;
}
.osnaps .osnap-on {
    color: #222;
}
.osnaps input {
    appearance: none;
    width: 21px;
    height: 21px;
    margin: 0;
    border: 2px solid #bcc4dc;
}
.osnaps input:checked {
    background-color: #fff;
}
.osnaps input:checked::after {
    content: "";
    display: block;
    width: 6px;
    height: 12px;
    margin: 0 0 0 6px;
    border: solid #111;
    border-width: 0 3px 3px 0;
    transform: rotate(45deg);
}
.viewport {
    flex: 1;
    min-width: 0;
    overflow: hidden;
    background-color: #9ba2aa;
}

/* Grasshopper window */
.window {
    position: absolute;
    left: 91px;
    right: 446px;
    top: 47px;
    bottom: -11px;
    display: flex;
    flex-direction: column;
    border: 1px solid #b0b4b0;
    border-radius: 13px 13px 0 0;
    background-color: #f0f0f0;
    box-shadow: 0 14px 44px rgba(0, 0, 0, 0.5);
}
.titlebar {
    flex: none;
    display: flex;
    align-items: center;
    height: 43px;
    padding-left: 12px;
    border-radius: 12px 12px 0 0;
    background-color: #eef8dc;
}
.titlebar h1 {
    flex: 1;
    color: #222;
}
.caption-button {
    display: flex;
    justify-content: center;
    align-items: center;
    width: 70px;
    height: 43px;
}
.caption-button svg {
    width: 16px;
    height: 16px;
}
.menu {
    flex: none;
    display: flex;
    align-items: center;
    gap: 28px;
    height: 45px;
    padding: 3px 15px 0 20px;
    background: linear-gradient(to right, #f2f2f2, #fdfdfd 60%);
}
.menu-doc {
    margin-left: auto;
}
.tabs {
    flex: none;
    display: flex;
    gap: 26px;
    height: 34px;
    padding-left: 12px;
    line-height: 37px;
    color: #6e6e6e;
}
.tabs .tab-active {
    height: 35px;
    margin: 0 -14px;
    padding: 0 12px;
    position: relative;
    z-index: 1;
    line-height: 32px;
    color: #000;
    border: 1px solid #a0a0a0;
    border-bottom: none;
    border-radius: 9px 9px 0 0;
    background: linear-gradient(#fff 60%, #dedede);
}
.ribbon {
    flex: none;
    display: flex;
    gap: 5px;
    height: 136px;
    padding: 3px 3px 0;
    border: 1px solid #a0a0a0;
    border-bottom: none;
    border-radius: 11px 11px 0 0;
    background: linear-gradient(#d6d6d6, #f0f0f0 85%);
}
.group {
    display: flex;
    flex-direction: column;
    height: 108px;
    border: 1px solid #888;
    border-radius: 7px;
    overflow: hidden;
    background: linear-gradient(#dcdcdc, #eaeaea);
    box-shadow: inset 0 1px 1px #fff;
}
.cells {
    flex: 1;
    display: flex;
    gap: 10px;
    padding: 6px 7px 0;
}
.col {
    display: flex;
    flex-direction: column;
    gap: 10px;
}
.col svg {
    width: 32px;
    height: 32px;
    overflow: visible;
    filter: drop-shadow(1px 1px 1px rgba(0, 0, 0, 0.3));
}
.sep {
    width: 2px;
    height: 76px;
    margin: 0 2px 0 1px;
    background: linear-gradient(to right, #c4c4c4 50%, #f4f4f4 50%);
}
.group h3 {
    position: relative;
    height: 20px;
    padding-right: 16px;
    font-size: 15px;
    line-height: 18px;
    text-align: center;
    color: #fff;
    background: linear-gradient(#333, #181818);
}
.group h3::before,
.group h3::after {
    content: "";
    position: absolute;
}
.group h3::before {
    right: 7px;
    top: 4px;
    width: 3px;
    height: 6px;
    background-color: #aaa;
}
.group h3::after {
    right: 3px;
    top: 8px;
    border: 5px solid transparent;
    border-top: 6px solid #aaa;
    border-bottom: none;
}
.ink {
    font: bold 13px "DejaVu Sans", sans-serif;
    fill: #222;
}
.ink-lg {
    font-size: 14px;
}
.ink-sm {
    font-size: 9px;
}
.ink-mid {
    font-size: 11px;
    text-anchor: middle;
}

/* Toolbar above the canvas */
.canvas-bar {
    flex: none;
    display: flex;
    align-items: center;
    height: 46px;
    margin: 0 1px;
    padding: 0 6px 2px 2px;
    border-top: 2px solid #777;
    background: linear-gradient(#fff, #f4f4f4);
}
.bar-button {
    flex: none;
    width: 40px;
    height: 42px;
    padding: 4px 3px;
    border: 1px solid transparent;
}
.bar-button svg {
    width: 32px;
    height: 32px;
    overflow: visible;
}
.bar-selected {
    border-color: #0078d7;
}
.bar-right {
    margin-left: auto;
}
.bar-sep {
    width: 1px;
    height: 34px;
    margin: 0 8px 0 9px;
    background-color: #b8b8b8;
}
.bar-sep-left {
    margin: 0 4px 0 6px;
}
.bar-sep-right {
    margin: 0 1px 0 4px;
}
.zoom-box {
    position: relative;
    width: 224px;
    margin-right: 3px;
}
.zoom-box select {
    display: block;
    appearance: none;
    width: 100%;
    height: 33px;
    padding: 0 4px;
    font: inherit;
    color: #000;
    border: 1px solid #7a7a7a;
    border-radius: 0;
    background-color: #fff;
}
.zoom-box::after {
    content: "";
    position: absolute;
    right: 10px;
    top: 9px;
    width: 8px;
    height: 8px;
    border: solid #444;
    border-width: 0 1px 1px 0;
    transform: rotate(45deg);
}
.caret {
    margin: 2px 6px 0 5px;
    border: 4px solid transparent;
    border-top-color: #000;
    border-bottom: none;
}
.caret-last {
    margin: 2px 0 0 1px;
}

/* Canvas */
.canvas {
    flex: 1;
    min-height: 0;
    position: relative;
    overflow: hidden;
    margin: 0 1px;
    background-color: #d4d0c8;
}
.wires {
    position: absolute;
    left: 0;
    top: 0;
}
.grid-line {
    stroke: #bbb8b0;
    stroke-width: 2;
}
.wire {
    fill: none;
    stroke: #5a5853;
    stroke-width: 5;
}
.wire-outer {
    fill: none;
    stroke: #5a5853;
    stroke-width: 9;
}
.wire-inner {
    fill: none;
    stroke: #cfccc2;
    stroke-width: 2;
}
.wire-tree {
    fill: none;
    stroke: #92c05c;
    stroke-width: 9;
    stroke-linecap: round;
}
.wire-tree-inner {
    fill: none;
    stroke: #d4d8be;
    stroke-width: 3;
    stroke-linecap: round;
}
.node {
    position: absolute;
    display: flex;
    padding: 1px 0;
    border: 2px solid #3a3a3a;
    border-radius: 6px;
    background: linear-gradient(#fff, #f0f0f0 14px, #e4e4e4 14px, #c6c6c6);
    box-shadow: 0 1px 3px rgba(0, 0, 0, 0.25);
}
.node-trigrid {
    left: 87px;
    top: 45px;
    width: 151px;
    height: 149px;
}
.node-area {
    left: 401px;
    top: 59px;
    width: 117px;
    height: 79px;
}
.node-explode {
    left: 348px;
    top: 197px;
    width: 116px;
    height: 117px;
}
.node-item {
    left: 498px;
    top: 279px;
    width: 132px;
    height: 115px;
    border-color: #14380c;
    background: linear-gradient(#dcfcc0, #b4f47c 14px, #9cf04c 14px, #82d834);
}
.node ul {
    display: flex;
    flex-direction: column;
    padding-bottom: 2px;
}
.node li {
    position: relative;
    flex: 1;
    display: flex;
    align-items: center;
    color: #111;
}
.node .ins {
    width: 38px;
    padding-right: 9px;
}
.node-area .ins {
    width: 33px;
}
.node-explode .ins {
    width: 31px;
    padding-right: 8px;
}
.node-item .ins {
    width: 37px;
}
.node .ins li {
    justify-content: flex-end;
}
.node .outs {
    flex: 1;
    padding-left: 8px;
}
.node li::before {
    content: "";
    position: absolute;
    top: calc(50% - 9px);
    width: 8px;
    height: 17px;
    border: 3px solid #000;
    background-color: #fff;
}
.node .ins li::before {
    left: -9px;
    border-right: none;
    border-radius: 8px 0 0 8px;
}
.node .outs li::before {
    right: -9px;
    border-left: none;
    border-radius: 0 8px 8px 0;
}
.node h4 {
    display: flex;
    justify-content: center;
    align-items: center;
    width: 44px;
    padding-right: 3px;
    border: 2px solid #000;
    border-radius: 6px;
    font-size: 22px;
    font-weight: bold;
    color: #fff;
    background: linear-gradient(#8a8a8a, #a4a4a4 9px, #505050 9px, #303030);
    box-shadow: inset 0 0 0 1px #888;
}
.node h4 span {
    writing-mode: vertical-rl;
    transform: rotate(180deg);
}
.node-item h4 {
    color: #bcfcb0;
    border-color: #0c2c08;
    background: linear-gradient(#5c8858, #88a884 9px, #345834 9px, #1c3c18);
    box-shadow: inset 0 0 0 1px #5c8c50;
}
.flatten {
    width: 25px;
    height: 25px;
    margin: 0 5px 0 auto;
    border: 2px solid #444;
    border-radius: 4px;
    background: linear-gradient(#f8f8f8, #ccc);
}
.edge-widget {
    position: absolute;
    left: 0;
    bottom: 0;
    width: 10px;
    height: 42px;
    border: solid #000;
    border-width: 1px 1px 1px 0;
    background: linear-gradient(#ccc, #a4a4a4 15px, #808080 15px, #888);
}
.status {
    flex: none;
    height: 21px;
    border-top: 2px solid #fff;
    background-color: #f0f0f0;
}
```

FILE: script.js
```js
const scene = document.getElementById('scene');
const NS = 'http://www.w3.org/2000/svg';

// screen position of the viewport origin
const OX = 160;
const OY = 170;

function addPath(d, stroke, width, opacity) {
    const path = document.createElementNS(NS, 'path');
    path.setAttribute('d', d);
    path.setAttribute('fill', 'none');
    path.setAttribute('stroke', stroke);
    path.setAttribute('stroke-width', width);
    path.setAttribute('stroke-opacity', opacity || 1);
    scene.appendChild(path);
}

function line(a, b) {
    return `M${a[0] - OX} ${a[1] - OY}L${b[0] - OX} ${b[1] - OY}`;
}

// Construction plane in perspective, u and v go from -1 to 1
function plane(u, v) {
    const a = -0.0846 * u;
    const b = 0.1266 * v;
    const w = 1 + a + b;
    return [(1228 - 1716 * a + 2173 * b) / w, (708 - 43 * a + 15 * b) / w];
}

function planeGrid(steps) {
    let d = '';
    for (let i = -steps; i <= steps; i++) {
        const t = i / steps;
        d += line(plane(-1, t), plane(1, t)) + line(plane(t, -1), plane(t, 1));
    }
    return d;
}

addPath(planeGrid(75), '#838a94', 1, 0.3);
addPath(planeGrid(15), '#7c828b', 1, 0.8);
addPath(line(plane(0, 0), plane(0, 1)), '#4a9a4a', 1.5);
addPath(line(plane(0, 0), [1500, 779]), '#962020', 2);

// Small grid around the origin
let small = '';
for (let i = 0; i <= 10; i++) {
    const t = i / 10;
    small += line([1216 + 29 * t, 691 + 7 * t], [1214 + 29 * t, 721 + 6 * t]);
    small += line([1216 - 2 * t, 691 + 30 * t], [1245 - 2 * t, 698 + 29 * t]);
}
addPath(small, '#990000', 1);

// Triangular mesh
const rows = [
    [[1300, 259], [1380, 267], [1465, 275], [1554, 284]],
    [[1257, 326], [1334, 335], [1414, 345], [1500, 355], [1590, 366]],
    [[1289, 399], [1367, 410], [1448, 422], [1535, 435]],
    [[1247, 460], [1321, 473], [1400, 486], [1482, 500], [1570, 515]],
    [[1279, 532], [1354, 546], [1432, 561], [1516, 577]],
    [[1238, 587], [1310, 603], [1385, 619], [1466, 636], [1550, 654]],
    [[1268, 657], [1341, 674], [1418, 692], [1498, 711]],
    [[1228, 708], [1299, 727], [1373, 746], [1450, 766], [1532, 787]]
];

let edges = '';
let marks = '';

function mark(x, y) {
    x -= OX;
    y -= OY;
    return `M${x - 5} ${y - 5}l10 10M${x + 5} ${y - 5}l-10 10`;
}

function centroid(a, b, c) {
    marks += mark(Math.round((a[0] + b[0] + c[0]) / 3), Math.round((a[1] + b[1] + c[1]) / 3));
}

rows.forEach(function(row, r) {
    for (let i = 1; i < row.length; i++) {
        edges += line(row[i - 1], row[i]);
    }
    if (r === 0) return;
    const even = r % 2 ? rows[r - 1] : row;
    const odd = r % 2 ? row : rows[r - 1];
    even.forEach(function(p, i) {
        edges += line(p, odd[i]) + line(p, odd[i + 1]);
        centroid(p, odd[i], odd[i + 1]);
        if (even[i + 1]) {
            centroid(p, even[i + 1], odd[i + 1]);
        }
    });
});

addPath(edges, '#990a0a', 1.3);
addPath(marks, '#990000', 5);
addPath(rows.flat().map(p => mark(p[0], p[1])).join(''), '#009900', 5);
```
